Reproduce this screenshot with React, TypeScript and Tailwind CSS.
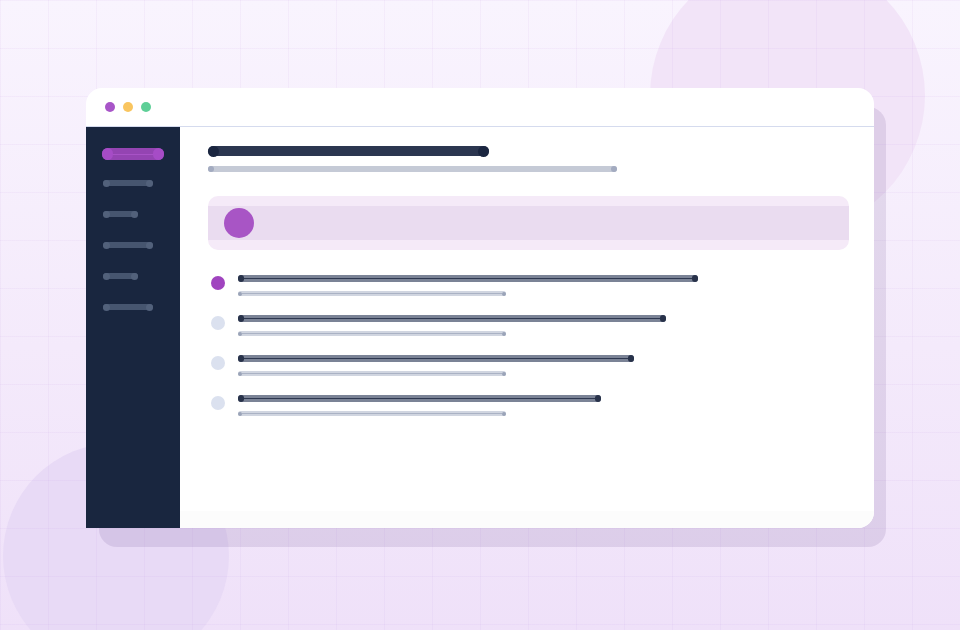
import React from "react";

type CapBarProps = {
  width: number;
  bar: string;
  line: string;
  cap: string;
  height: string;
  capSize: string;
};

// A skeleton line with rounded end caps and a thin centre stroke.
function CapBar({ width, bar, line, cap, height, capSize }: CapBarProps) {
  return (
    <div
      className={`flex items-center justify-between rounded-full ${bar} ${height}`}
      style={{ width }}
    >
      <div className={`shrink-0 rounded-full ${cap} ${capSize}`} />
      <div className={`h-px flex-1 ${line}`} />
      <div className={`shrink-0 rounded-full ${cap} ${capSize}`} />
    </div>
  );
}

function SideItem({ width }: { width: number }) {
  return (
    <CapBar
      width={width}
      bar="bg-[#46556f]"
      line="bg-[#46556f]"
      cap="bg-[#52617b]"
      height="h-[6px]"
      capSize="w-[7px] h-[7px]"
    />
  );
}

function Row({ width, active }: { width: number; active?: boolean }) {
  return (
    <div className="flex items-start">
      <div
        className={`ml-[3px] mt-px h-[14px] w-[14px] shrink-0 rounded-full ${
          active ? "bg-[#a044bf]" : "bg-[#dbe1ef]"
        }`}
      />
      <div className="ml-[13px] flex flex-col">
        <CapBar
          width={width}
          bar="bg-[#7b8396]"
          line="bg-[#2e3850]"
          cap="bg-[#28324a]"
          height="h-[7px]"
          capSize="w-[6px] h-[7px]"
        />
        <div className="mt-[9px]">
          <CapBar
            width={268}
            bar="bg-[#d0d5e0]"
            line="bg-[#aab2c4]"
            cap="bg-[#9aa3b8]"
            height="h-[5px]"
            capSize="w-[4px] h-[4px]"
          />
        </div>
      </div>
    </div>
  );
}

export default function App() {
  return (
    <div className="relative h-[630px] w-[960px] overflow-hidden bg-[linear-gradient(to_bottom,#f9f4fe,#f4eafb_55%,#efe1f9)]">
      {/* soft decorative discs */}
      <div className="absolute left-[650px] top-[-42px] h-[275px] w-[275px] rounded-full bg-[#f2e4f8]" />
      <div className="absolute left-[3px] top-[443px] h-[226px] w-[226px] rounded-full bg-[#e8daf6]" />

      {/* faint 48px grid */}
      <div className="absolute inset-0 bg-[image:linear-gradient(to_right,rgba(190,150,225,0.09)_1px,transparent_1px),linear-gradient(to_bottom,rgba(190,150,225,0.09)_1px,transparent_1px)] bg-[size:48px_48px]" />

      <div className="relative pl-[86px] pt-[88px]">
        <div className="relative h-[440px] w-[788px]">
          {/* drop shadow plate */}
          <div className="absolute left-[13px] top-[19px] h-[440px] w-[787px] rounded-[18px] bg-[rgba(80,50,120,0.12)]" />

          {/* window */}
          <div className="relative flex h-[440px] w-[788px] flex-col overflow-hidden rounded-[16px] rounded-bl-none bg-white">
            <div className="flex h-[39px] shrink-0 items-center gap-[8px] border-b border-[#d5dbee] pl-[19px]">
              <div className="h-[10px] w-[10px] rounded-full bg-[#a855c8]" />
              <div className="h-[10px] w-[10px] rounded-full bg-[#f9c55f]" />
              <div className="h-[10px] w-[10px] rounded-full bg-[#5ecf97]" />
            </div>

            <div className="flex flex-1">
              {/* sidebar */}
              <div className="flex w-[94px] shrink-0 flex-col bg-[#19263f] pl-[16px] pt-[21px]">
                <div className="flex h-[12px] w-[62px] items-center justify-between rounded-full bg-[#9444b2]">
                  <div className="h-[12px] w-[11px] rounded-full bg-[#a64cc6]" />
                  <div className="h-px flex-1 bg-[#a852c6]" />
                  <div className="h-[12px] w-[11px] rounded-full bg-[#a64cc6]" />
                </div>
                <div className="mt-[20px] flex flex-col gap-[25px] pl-px">
                  <SideItem width={50} />
                  <SideItem width={35} />
                  <SideItem width={50} />
                  <SideItem width={35} />
                  <SideItem width={50} />
                </div>
              </div>

              {/* main content */}
              <div className="flex flex-1 flex-col">
                <div className="flex flex-1 flex-col pl-[28px] pt-[19px]">
                  <CapBar
                    width={281}
                    bar="bg-[#2b3650]"
                    line="bg-[#2b3650]"
                    cap="bg-[#1b2640]"
                    height="h-[10px]"
                    capSize="w-[11px] h-[11px]"
                  />
                  <div className="mt-[10px]">
                    <CapBar
                      width={409}
                      bar="bg-[#c5cad6]"
                      line="bg-[#c5cad6]"
                      cap="bg-[#a3abc0]"
                      height="h-[6px]"
                      capSize="w-[6px] h-[6px]"
                    />
                  </div>

                  {/* highlighted banner */}
                  <div className="mt-[24px] flex h-[54px] w-[641px] flex-col justify-center rounded-[10px] bg-[#f5eaf8]">
                    <div className="flex h-[34px] items-center bg-[#eadcf0] pl-[16px]">
                      <div className="h-[30px] w-[30px] rounded-full bg-[#a855c5]" />
                    </div>
                  </div>

                  <div className="mt-[25px] flex flex-col gap-[19px]">
                    <Row width={460} active />
                    <Row width={428} />
                    <Row width={396} />
                    <Row width={363} />
                  </div>
                </div>
                <div className="h-[17px] shrink-0 bg-[#fcfcfc]" />
              </div>
            </div>
          </div>
        </div>
      </div>
    </div>
  );
}
